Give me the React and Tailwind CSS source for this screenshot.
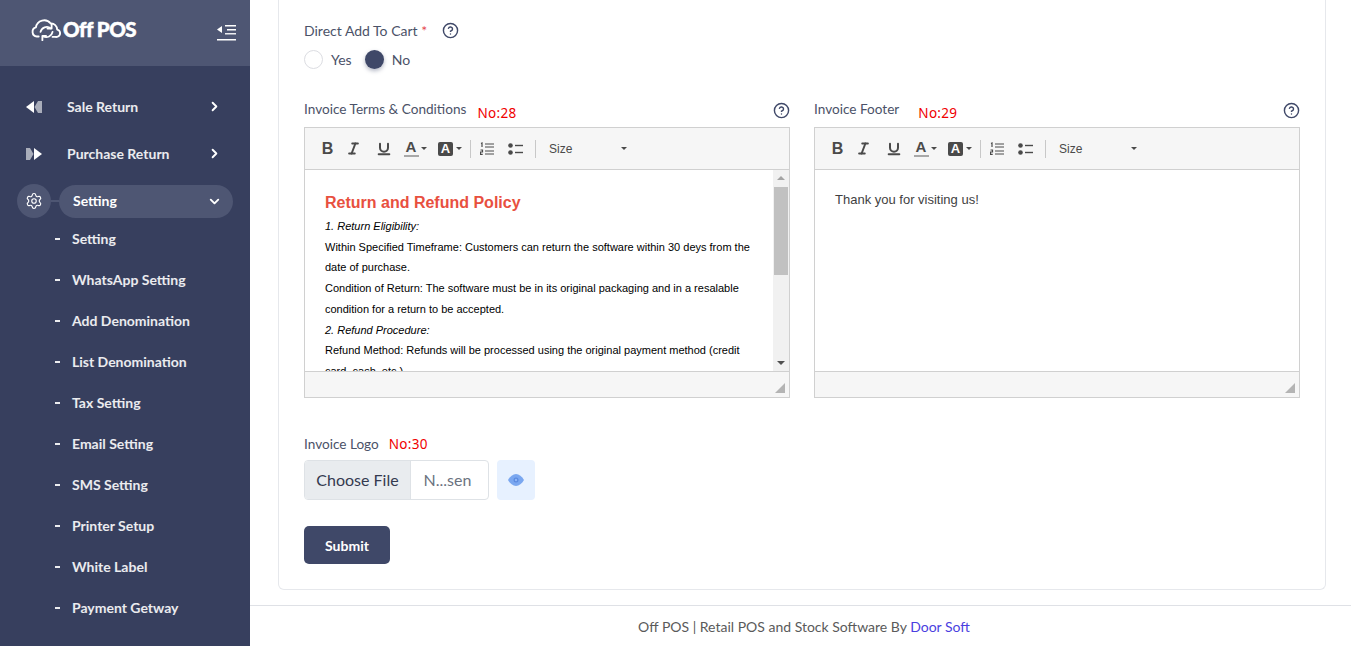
import React from "react";
import { ChevronDown, ChevronRight, CircleHelp, Italic, Settings, Underline } from "lucide-react";

const subItems = [
  "Setting",
  "WhatsApp Setting",
  "Add Denomination",
  "List Denomination",
  "Tax Setting",
  "Email Setting",
  "SMS Setting",
  "Printer Setup",
  "White Label",
  "Payment Getway",
];

const Logo = () => (
  <svg width="32" height="24" viewBox="0 0 34 26" fill="none" stroke="white" strokeWidth="2" strokeLinecap="round" strokeLinejoin="round">
    <path d="M8 20H6a5 5 0 0 1-1-9.800A9 9 0 0 1 21 6a6.500 6.500 0 0 1 7 6.500 4 4 0 0 1 1 7.500 5 5 0 0 1-3 .5h-3" />
    <path d="M10 15a7 7 0 0 1 11-4" />
    <path d="M22 7v4.500h-4.500" />
    <path d="M23 15a7 7 0 0 1-10 5" />
    <path d="M12 24v-4.500h4" />
  </svg>
);

const Collapse = () => (
  <svg width="20" height="18" viewBox="0 0 20 18" fill="white">
    <path d="M0 5.500 5 2v7z" />
    <rect x="8" y="1" width="11" height="1.500" />
    <rect x="10" y="5" width="9" height="1.500" />
    <rect x="8" y="9" width="11" height="1.500" opacity="0.9" />
    <rect x="0" y="15" width="19" height="1.500" />
  </svg>
);

const ReturnIcon = ({ flip }) => (
  <svg width="16" height="14" viewBox="0 0 16 14" className={flip ? "-scale-x-100" : ""}>
    <path d="M0 7 8 1v12z" fill="white" />
    <path d="M8.500 7 12 1h4v12h-4z" fill="#a9adba" />
  </svg>
);

const NavItem = ({ icon, label }) => (
  <div className="flex h-[47px] items-center pr-[28px] pl-[26px]">
    <span className="flex w-[41px]">{icon}</span>
    <span className="flex-1 text-[14px] font-bold text-white/90">{label}</span>
    <ChevronRight size={15} strokeWidth={3} className="text-white" />
  </div>
);

const ToolbarIcon = ({ children, className = "" }) => (
  <span className={`flex h-[30px] items-center justify-center text-[#4a4a4a] ${className}`}>{children}</span>
);

const Caret = () => <span className="ml-[3px] h-0 w-0 border-x-[3px] border-t-[3px] border-x-transparent border-t-[#4a4a4a]" />;

const OlIcon = () => (
  <svg width="14" height="13" viewBox="0 0 14 13" stroke="#4a4a4a" fill="none" strokeWidth="1.200">
    <path d="M1 1.500l1-.5v4M5 2h9M5 5h9M5 9h9M5 12h9M0.500 8h2v2h-2v2.300h2.200" />
  </svg>
);

const UlIcon = () => (
  <svg width="15" height="12" viewBox="0 0 15 12" fill="#4a4a4a">
    <circle cx="2.500" cy="2.500" r="2.300" />
    <circle cx="2.500" cy="9.500" r="2.300" />
    <rect x="7" y="1.800" width="8" height="1.400" />
    <rect x="7" y="8.800" width="8" height="1.400" />
  </svg>
);

const Toolbar = () => (
  <div className="flex h-[42px] items-center border-b border-[#d0d0d0] bg-[#f6f6f6] pl-[14px]">
    <ToolbarIcon className="w-[17px] font-['Liberation_Sans',sans-serif] text-[16px] font-bold">B</ToolbarIcon>
    <ToolbarIcon className="w-[35px]"><Italic size={15} strokeWidth={3.200} /></ToolbarIcon>
    <ToolbarIcon className="w-[25px]"><Underline size={16} strokeWidth={3} /></ToolbarIcon>
    <ToolbarIcon className="ml-[8px]">
      <span className="flex w-[14px] flex-col items-center">
        <span className="font-['Liberation_Sans',sans-serif] text-[15px] leading-[14px] font-bold">A</span>
        <span className="mt-[1px] h-[2px] w-[15px] bg-[#a8a8a8]" />
      </span>
      <Caret />
    </ToolbarIcon>
    <ToolbarIcon className="ml-[11px]">
      <span className="flex h-[14px] w-[15px] items-center justify-center rounded-[2px] bg-[#4a4a4a] font-['Liberation_Sans',sans-serif] text-[13px] font-bold text-white">A</span>
      <Caret />
    </ToolbarIcon>
    <span className="ml-[8px] h-[18px] w-px bg-[#c8c8c8]" />
    <ToolbarIcon className="ml-[9px]"><OlIcon /></ToolbarIcon>
    <ToolbarIcon className="ml-[14px]"><UlIcon /></ToolbarIcon>
    <span className="ml-[12px] h-[18px] w-px bg-[#c8c8c8]" />
    <span className="ml-[13px] w-[69px] font-['Liberation_Sans',sans-serif] text-[12px] text-[#4a4a4a]">Size</span>
    <Caret />
  </div>
);

const StatusBar = () => (
  <div className="flex h-[26px] items-end justify-end border-t border-[#d0d0d0] bg-[#f6f6f6] pr-[4px] pb-[4px]">
    <svg width="10" height="10" viewBox="0 0 10 10"><path d="M10 0v10H0z" fill="#b4b4b4" /></svg>
  </div>
);

const Scrollbar = () => (
  <div className="flex w-[16px] shrink-0 flex-col items-center bg-[#f1f1f1]">
    <div className="mt-[6px] h-0 w-0 border-x-[4px] border-b-[4px] border-x-transparent border-b-[#a3a3a3]" />
    <div className="mt-[7px] h-[88px] w-[14px] bg-[#c1c1c1]" />
    <div className="mt-auto mb-[6px] h-0 w-0 border-x-[4px] border-t-[4px] border-x-transparent border-t-[#505050]" />
  </div>
);

const Label = ({ text, no, noClass = "" }) => (
  <div className="flex h-[24px] items-center justify-between">
    <div className="flex h-[24px] items-center">
      <span className="text-[13.600px] text-[#4b5268]">{text}</span>
      <span className={`font-['Noto_Sans',sans-serif] text-[13.500px] tracking-[0.3px] text-[#f00000] ${noClass}`}>{no}</span>
    </div>
    <CircleHelp size={17} strokeWidth={2} className="mt-[2px] text-[#3f4868]" />
  </div>
);

export default function App() {
  return (
    <div className="flex h-screen overflow-hidden bg-white font-['Lato',sans-serif]">
      <aside className="flex w-[250px] shrink-0 flex-col bg-[#373f5e] text-white">
        <div className="flex h-[66px] items-center justify-between bg-[#4e5673] pr-[13px] pl-[31px]">
          <div className="mb-[7px] flex items-center">
            <Logo />
            <span className="text-[20.500px] font-black tracking-[-0.5px] [-webkit-text-stroke:0.5px_white]">Off POS</span>
          </div>
          <Collapse />
        </div>
        <div className="pt-[17px]">
          <NavItem icon={<ReturnIcon />} label="Sale Return" />
          <NavItem icon={<ReturnIcon flip />} label="Purchase Return" />
        </div>
        <div className="mt-[7px] flex items-center pl-[17px]">
          <span className="flex h-[34px] w-[34px] items-center justify-center rounded-full bg-[#4e5673]">
            <Settings size={18} strokeWidth={1.500} />
          </span>
          <span className="h-[2px] w-[8px] bg-[#4e5673]" />
          <div className="flex h-[33px] w-[174px] items-center justify-between rounded-full bg-[#4e5673] pr-[11px] pl-[14px]">
            <span className="mb-[1px] text-[14px] font-bold">Setting</span>
            <ChevronDown size={15} strokeWidth={3} />
          </div>
        </div>
        <ul>
          {subItems.map((item) => (
            <li key={item} className="flex h-[41px] items-center pl-[55px] text-[14px] font-bold text-white/90">
              <span className="mr-[12px] h-[2px] w-[5px] bg-white/90" />
              {item}
            </li>
          ))}
        </ul>
      </aside>

      <main className="flex min-w-0 flex-1 flex-col">
        <div className="mr-[25px] ml-[28px] rounded-b-[6px] border-x border-b border-[#e6e8ec] px-[25px] pt-[20px] pb-[25px]">
          <div className="flex items-center">
            <span className="text-[14px] text-[#4b5268]">Direct Add To Cart <span className="text-[#e5484d]">*</span></span>
            <CircleHelp size={17} strokeWidth={2} className="ml-[15px] text-[#3f4868]" />
          </div>
          <div className="mt-[8px] flex items-center text-[14px] text-[#4b5268]">
            <span className="h-[19px] w-[19px] rounded-full border border-[#dcdde2] bg-white" />
            <span className="ml-[8px]">Yes</span>
            <span className="ml-[13px] h-[19px] w-[19px] rounded-full bg-[#3f4868] shadow-[0_2px_4px_rgba(63,72,104,0.4)]" />
            <span className="ml-[8px]">No</span>
          </div>

          <div className="mt-[27px] grid grid-cols-2 gap-[24px]">
            <div>
              <Label text="Invoice Terms & Conditions" no="No:28" noClass="ml-[11px] mt-[8px]" />
              <div className="mt-[6px] border border-[#d0d0d0]">
                <Toolbar />
                <div className="flex h-[201px] overflow-hidden">
                  <div className="flex-1 pt-[21px] pr-[18px] pl-[20px] font-['Liberation_Sans',sans-serif] text-[11px] leading-[20.700px] text-black">
                    <h4 className="mb-[1px] text-[16px] leading-[24px] font-bold text-[#e8503f]">Return and Refund Policy</h4>
                    <p className="italic">1. Return Eligibility:</p>
                    <p>Within Specified Timeframe: Customers can return the software within 30 deys from the date of purchase.</p>
                    <p>Condition of Return: The software must be in its original packaging and in a resalable condition for a return to be accepted.</p>
                    <p className="italic">2. Refund Procedure:</p>
                    <p>Refund Method: Refunds will be processed using the original payment method (credit card, cash, etc.).</p>
                  </div>
                  <Scrollbar />
                </div>
                <StatusBar />
              </div>
            </div>
            <div>
              <Label text="Invoice Footer" no="No:29" noClass="ml-[19px] mt-[8px]" />
              <div className="mt-[6px] border border-[#d0d0d0]">
                <Toolbar />
                <div className="h-[201px] pt-[20px] pl-[20px] font-['Liberation_Sans',sans-serif] text-[13px] leading-[20px] text-[#3f3f3f]">
                  Thank you for visiting us!
                </div>
                <StatusBar />
              </div>
            </div>
          </div>

          <div className="mt-[36px] flex items-center">
            <span className="text-[13.600px] text-[#4b5268]">Invoice Logo</span>
            <span className="ml-[10px] font-['Noto_Sans',sans-serif] text-[13.500px] tracking-[0.3px] text-[#f00000]">No:30</span>
          </div>
          <div className="mt-[6px] flex items-center">
            <div className="flex h-[40px] w-[185px] overflow-hidden rounded-[4px] border border-[#dee2e6] text-[16px]">
              <span className="flex w-[106px] items-center justify-center border-r border-[#dee2e6] bg-[#e9ecef] text-[#343a50]">Choose File</span>
              <span className="flex flex-1 items-center justify-center pr-[4px] text-[#6b7280]">N...sen</span>
            </div>
            <span className="ml-[8px] flex h-[40px] w-[38px] items-center justify-center rounded-[4px] bg-[#e7f1ff]">
              <svg width="16" height="12" viewBox="0 0 16 12">
                <path d="M0 6c2-3.500 5-6 8-6s6 2.500 8 6c-2 3.500-5 6-8 6S2 9.500 0 6z" fill="#7aa7f0" />
                <circle cx="8" cy="6" r="2.500" fill="#5b8be0" />
                <circle cx="8" cy="6" r="1.200" fill="#8fb6f5" />
              </svg>
            </span>
          </div>
          <button className="mt-[26px] flex h-[38px] w-[86px] items-center justify-center rounded-[5px] bg-[#3f4868] text-[14px] font-bold text-white">Submit</button>
        </div>

        <footer className="mt-[15px] flex h-[41px] items-center justify-center border-t border-[#dfe1e6] pl-[7px] text-[14px] text-[#5a5a5a]">
          <span>Off POS | Retail POS and Stock Software By <span className="text-[#4a3fe0]">Door Soft</span></span>
        </footer>
      </main>
    </div>
  );
}
